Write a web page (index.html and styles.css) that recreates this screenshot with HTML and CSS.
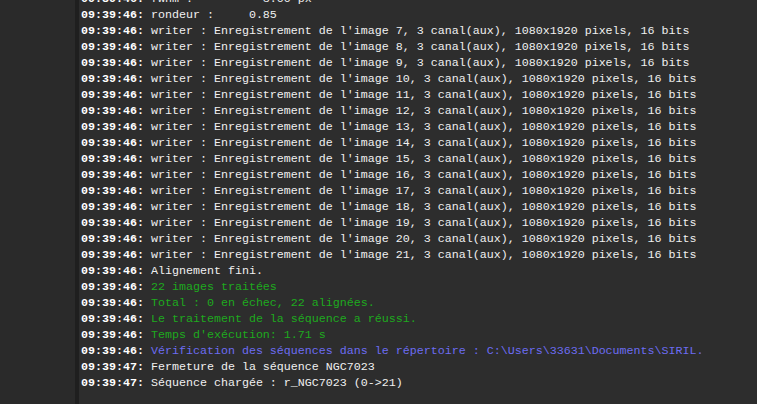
FILE: index.html
```html
<!DOCTYPE html>
<html lang="fr">
<head>
<meta charset="utf-8">
<title>Console</title>
<link rel="stylesheet" href="styles.css">
</head>
<body>
<div class="app">
  <div class="side"></div>
  <div class="divider"></div>
  <div class="console">
    <div class="log">
      <div class="line"><span class="ts">09:39:46: </span><span class="msg">fwhm :          3.00 px</span></div>
      <div class="line"><span class="ts">09:39:46: </span><span class="msg">rondeur :     0.85</span></div>
      <div class="line"><span class="ts">09:39:46: </span><span class="msg">writer : Enregistrement de l'image 7, 3 canal(aux), 1080x1920 pixels, 16 bits</span></div>
      <div class="line"><span class="ts">09:39:46: </span><span class="msg">writer : Enregistrement de l'image 8, 3 canal(aux), 1080x1920 pixels, 16 bits</span></div>
      <div class="line"><span class="ts">09:39:46: </span><span class="msg">writer : Enregistrement de l'image 9, 3 canal(aux), 1080x1920 pixels, 16 bits</span></div>
      <div class="line"><span class="ts">09:39:46: </span><span class="msg">writer : Enregistrement de l'image 10, 3 canal(aux), 1080x1920 pixels, 16 bits</span></div>
      <div class="line"><span class="ts">09:39:46: </span><span class="msg">writer : Enregistrement de l'image 11, 3 canal(aux), 1080x1920 pixels, 16 bits</span></div>
      <div class="line"><span class="ts">09:39:46: </span><span class="msg">writer : Enregistrement de l'image 12, 3 canal(aux), 1080x1920 pixels, 16 bits</span></div>
      <div class="line"><span class="ts">09:39:46: </span><span class="msg">writer : Enregistrement de l'image 13, 3 canal(aux), 1080x1920 pixels, 16 bits</span></div>
      <div class="line"><span class="ts">09:39:46: </span><span class="msg">writer : Enregistrement de l'image 14, 3 canal(aux), 1080x1920 pixels, 16 bits</span></div>
      <div class="line"><span class="ts">09:39:46: </span><span class="msg">writer : Enregistrement de l'image 15, 3 canal(aux), 1080x1920 pixels, 16 bits</span></div>
      <div class="line"><span class="ts">09:39:46: </span><span class="msg">writer : Enregistrement de l'image 16, 3 canal(aux), 1080x1920 pixels, 16 bits</span></div>
      <div class="line"><span class="ts">09:39:46: </span><span class="msg">writer : Enregistrement de l'image 17, 3 canal(aux), 1080x1920 pixels, 16 bits</span></div>
      <div class="line"><span class="ts">09:39:46: </span><span class="msg">writer : Enregistrement de l'image 18, 3 canal(aux), 1080x1920 pixels, 16 bits</span></div>
      <div class="line"><span class="ts">09:39:46: </span><span class="msg">writer : Enregistrement de l'image 19, 3 canal(aux), 1080x1920 pixels, 16 bits</span></div>
      <div class="line"><span class="ts">09:39:46: </span><span class="msg">writer : Enregistrement de l'image 20, 3 canal(aux), 1080x1920 pixels, 16 bits</span></div>
      <div class="line"><span class="ts">09:39:46: </span><span class="msg">writer : Enregistrement de l'image 21, 3 canal(aux), 1080x1920 pixels, 16 bits</span></div>
      <div class="line"><span class="ts">09:39:46: </span><span class="msg">Alignement fini.</span></div>
      <div class="line"><span class="ts">09:39:46: </span><span class="msg green">22 images traitées</span></div>
      <div class="line"><span class="ts">09:39:46: </span><span class="msg green">Total : 0 en échec, 22 alignées.</span></div>
      <div class="line"><span class="ts">09:39:46: </span><span class="msg green">Le traitement de la séquence a réussi.</span></div>
      <div class="line"><span class="ts">09:39:46: </span><span class="msg green">Temps d'exécution: 1.71 s</span></div>
      <div class="line"><span class="ts">09:39:46: </span><span class="msg blue">Vérification des séquences dans le répertoire : C:\Users\33631\Documents\SIRIL.</span></div>
      <div class="line"><span class="ts">09:39:47: </span><span class="msg">Fermeture de la séquence NGC7023</span></div>
      <div class="line"><span class="ts">09:39:47: </span><span class="msg">Séquence chargée : r_NGC7023 (0-&gt;21)</span></div>
    </div>
  </div>
</div>
</body>
</html>
```
FILE: styles.css
```css
html, body {
  margin: 0;
  padding: 0;
  height: 100%;
  background: #2d2d2d;
  overflow: hidden;
}
.app {
  display: flex;
  height: 404px;
  width: 757px;
}
.side {
  width: 75px;
  flex: none;
  background: #2a2a2a;
}
.divider {
  width: 4px;
  flex: none;
  background: #1f1f1f;
}
.console {
  flex: 1;
  background: #2d2d2d;
  overflow: hidden;
  padding-left: 2px;
}
.log {
  margin-top: -9px;
  font-family: "Liberation Mono", "Courier New", monospace;
  font-size: 11.67px;
  line-height: 16px;
}
.line {
  height: 16px;
  white-space: pre;
}
.ts {
  color: #ffffff;
  font-weight: bold;
}
.msg {
  color: #f0f0f0;
}
.green {
  color: #1eaa1e;
}
.blue {
  color: #6c6cf2;
}
```
